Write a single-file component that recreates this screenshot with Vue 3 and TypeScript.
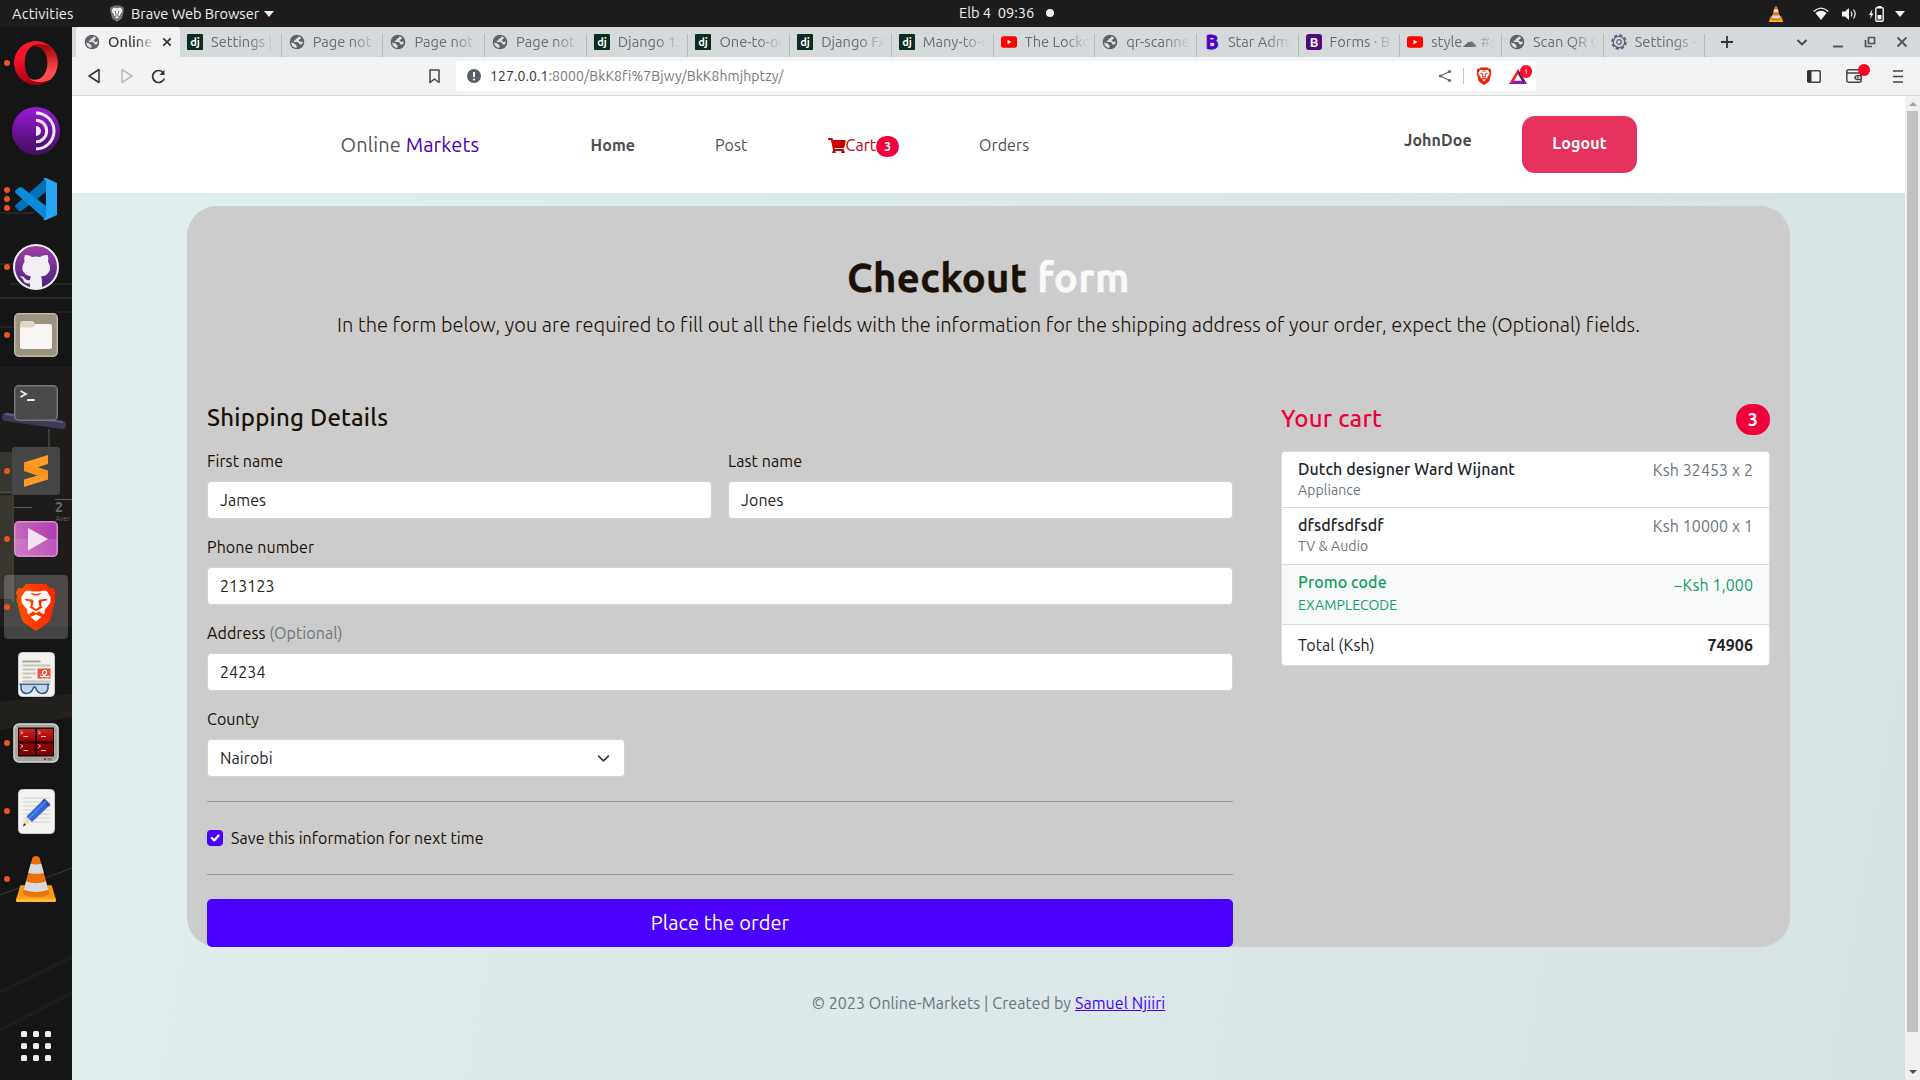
<script setup lang="ts">
interface Tab { icon: 'globe' | 'dj' | 'yt' | 'b' | 'forms' | 'gear'; title: string }
interface DockItem { icon: string; dots: number; active?: boolean }
interface CartItem { name: string; kind: string; price: string }

const tabs: Tab[] = [
  { icon: 'globe', title: 'Online' },
  { icon: 'dj', title: 'Settings |' },
  { icon: 'globe', title: 'Page not f' },
  { icon: 'globe', title: 'Page not f' },
  { icon: 'globe', title: 'Page not f' },
  { icon: 'dj', title: 'Django 1.' },
  { icon: 'dj', title: 'One-to-on' },
  { icon: 'dj', title: 'Django FA' },
  { icon: 'dj', title: 'Many-to-o' },
  { icon: 'yt', title: 'The Lockd' },
  { icon: 'globe', title: 'qr-scanne' },
  { icon: 'b', title: 'Star Admi' },
  { icon: 'forms', title: 'Forms · B' },
  { icon: 'yt', title: 'style☁ #s' },
  { icon: 'globe', title: 'Scan QR C' },
  { icon: 'gear', title: 'Settings -' },
]

const dock: DockItem[] = [
  { icon: 'opera', dots: 1 },
  { icon: 'tor', dots: 0 },
  { icon: 'vscode', dots: 3 },
  { icon: 'github', dots: 1 },
  { icon: 'files', dots: 1 },
  { icon: 'terminal', dots: 0 },
  { icon: 'sublime', dots: 1 },
  { icon: 'media', dots: 1 },
  { icon: 'brave', dots: 1, active: true },
  { icon: 'docs', dots: 0 },
  { icon: 'terminator', dots: 1 },
  { icon: 'notes', dots: 1 },
  { icon: 'vlc', dots: 1 },
]

const cart: CartItem[] = [
  { name: 'Dutch designer Ward Wijnant', kind: 'Appliance', price: 'Ksh 32453 x 2' },
  { name: 'dfsdfsdfsdf', kind: 'TV & Audio', price: 'Ksh 10000 x 1' },
]
</script>

<template>
  <div class="desktop">
    <svg class="defs" width="0" height="0" aria-hidden="true">
      <defs>
        <symbol id="lion" viewBox="0 0 40 48">
          <path d="M10 1 H30 L34 5.500 L37.500 5 L40 9.500 L38.500 13.500 L39.500 16.500 L34.500 36 Q33.500 39 31 40.600 L21.500 47 Q20 48 18.500 47 L9 40.600 Q6.500 39 5.500 36 L.5 16.500 L1.500 13.500 L0 9.500 L2.500 5 L6 5.500 Z" />
          <path fill="#fff" d="M12.500 7.600 L16.500 8.600 H23.500 L27.500 7.600 L31 8.200 L34.700 14.600 L34.200 20 L28.500 27 L29 30 L27 31.200 L23.200 28.200 L20 30 L16.800 28.200 L13 31.200 L11 30 L11.500 27 L5.800 20 L5.300 14.600 L9 8.200 Z" />
          <path d="M8.500 15.800 L16.300 16.400 L17.600 18 L16.500 23.500 L20 26.300 L23.500 23.500 L22.400 18 L23.700 16.400 L31.500 15.800 L30.500 17.400 L25.600 18.600 L25.200 22.600 L26.400 24.500 L20 28.500 L13.600 24.500 L14.800 22.600 L14.400 18.600 L9.500 17.400 Z M14 9.800 L20 11 L26 9.800 L22.500 12.500 H17.500 Z" />
          <path fill="#fff" d="M20 31.500 L25.500 34 L20 38.500 L14.500 34 Z" />
        </symbol>
        <symbol id="cone" viewBox="0 0 42 48">
          <path d="M5 31 H37 L41.500 46 Q41.500 48 40 48 H2 Q.5 48 .5 46 Z" fill="#f99b12" />
          <path d="M1 44.500 H41 L41.500 46.500 Q41 48 40 48 H2 Q.5 48 .5 46.500 Z" fill="#ffb838" />
          <path d="M17.500 2.500 Q21 -.5 24.500 2.500 L34.500 38 Q34 43 21 43 Q8 43 7.500 38 Z" fill="#e8730c" />
          <path d="M15.600 9 Q21 10.500 26.400 9 L29 18 Q21 20.500 13 18 Z M11 27 Q21 30.500 31 27 L33.600 35.500 Q21 40 8.400 35.500 Z" fill="#d5dade" />
        </symbol>
        <linearGradient id="torFill" x1="0" y1="0" x2="0" y2="1"><stop offset="0" stop-color="#991ad6" /><stop offset="1" stop-color="#420c5d" /></linearGradient>
        <linearGradient id="operaOuter" x1="0" y1="0" x2=".3" y2="1"><stop offset="0" stop-color="#ff1b2d" /><stop offset=".4" stop-color="#f51428" /><stop offset="1" stop-color="#a70014" /></linearGradient>
        <linearGradient id="operaInner" x1="0" y1="0" x2="0" y2="1"><stop offset="0" stop-color="#9c0000" /><stop offset=".7" stop-color="#ff4b4b" /></linearGradient>
        <linearGradient id="ghFill" x1="0" y1="0" x2="0" y2="1"><stop offset="0" stop-color="#a040a4" /><stop offset="1" stop-color="#452280" /></linearGradient>
        <linearGradient id="mediaFill" x1="0" y1="0" x2="1" y2="0"><stop offset="0" stop-color="#c569bb" /><stop offset="1" stop-color="#b23bb0" /></linearGradient>
        <linearGradient id="braveFill" x1="0" y1="0" x2="1" y2="0"><stop offset="0" stop-color="#ff5500" /><stop offset="1" stop-color="#ff2000" /></linearGradient>
        <linearGradient id="termRed" x1="0" y1="0" x2="0" y2="1"><stop offset="0" stop-color="#c22" /><stop offset=".5" stop-color="#900" /><stop offset="1" stop-color="#700" /></linearGradient>
      </defs>
    </svg>

    <header class="topbar">
      <span class="activities">Activities</span>
      <svg class="mini-lion" width="14" height="17" viewBox="0 0 40 48"><use href="#lion" fill="#777" /></svg>
      <span class="app-name">Brave Web Browser</span>
      <i class="tri"></i>
      <span class="clock"><span>Elb 4</span><span>09:36</span><i class="notif"></i></span>
      <div class="tray">
        <svg width="14" height="16" viewBox="0 0 42 48"><use href="#cone" /></svg>
        <svg class="wifi" width="16" height="14" viewBox="0 0 16 14"><path d="M.7 4.500 Q8 -2.300 15.300 4.500" fill="none" stroke="#f2f2f2" stroke-width="1.300" /><path d="M2.400 6 Q8 1.600 13.600 6 L8 13 Z" fill="#f2f2f2" /></svg>
        <svg class="vol" width="15" height="14" viewBox="0 0 15 14"><path d="M0 4.500 H3 L7 1 V13 L3 9.500 H0 Z" fill="#f2f2f2" /><path d="M9 4.500 Q10.800 7 9 9.500 M11.500 2.500 Q14.800 7 11.500 11.500" fill="none" stroke="#f2f2f2" stroke-width="1.200" /></svg>
        <svg class="bat" width="15" height="16" viewBox="0 0 15 16"><path d="M3.500 3 L0 9 H2 L1 13 L4.500 7.500 H2.600 Z" fill="#f2f2f2" /><rect x="6.800" y="1.800" width="7.400" height="13.400" rx="1" fill="none" stroke="#f2f2f2" stroke-width="1.400" /><rect x="8.500" y="0" width="4" height="2" fill="#f2f2f2" /><rect x="8.500" y="9" width="4" height="4.500" fill="#f2f2f2" /></svg>
        <i class="tri"></i>
      </div>
    </header>

    <div class="main">
      <aside class="dock">
        <svg class="wallpaper" width="72" height="1053" viewBox="0 0 72 1053">
          <rect width="72" height="1053" fill="#141514" />
          <rect y="340" width="72" height="260" fill="#1d1c1b" />
          <path d="M0 186 H34 M0 237 H40 M10 257 H72 M0 271 H72" stroke="#3e3b31" stroke-width="1.500" opacity=".6" />
          <path d="M0 300 H14 M56 285 H72" stroke="#3a3830" opacity=".7" />
          <path d="M6 390 L62 398" stroke="#3f3a55" stroke-width="8" stroke-linecap="round" />
          <path d="M6 387 L62 395" stroke="#5d5581" stroke-width="2.500" stroke-linecap="round" />
          <path d="M0 425 H12 V467 H0 Z M0 468 H12 V572 H0 Z" fill="#37362f" />
          <path d="M13 465 V575 M49 402 V440 M0 465 H14" stroke="#4a4539" stroke-width="1.500" />
          <path d="M55 472.500 H72 M14 480.500 H32" stroke="#5c5c59" />
          <text x="55" y="485" font-size="14" font-weight="700" fill="#6a6a68">2</text>
          <text x="55.500" y="493.500" font-size="7" fill="#6a6a68">Aver</text>
          <path d="M0 675 L72 667 V690 L0 703 Z" fill="#22211d" />
          <path d="M0 868 L72 841" stroke="#3b3d3b" />
          <path d="M0 965 L72 930 M0 1003 L72 966" stroke="#1c1d1a" stroke-width="4" />
        </svg>
        <div v-for="item in dock" :key="item.icon" class="dock-item" :class="{ active: item.active }">
          <span class="dots"><i v-for="n in item.dots" :key="n"></i></span>
          <svg v-if="item.icon === 'opera'" width="44" height="44" viewBox="0 0 44 44">
            <path fill-rule="evenodd" fill="url(#operaOuter)" d="M22 0 A22 22 0 1 0 22 44 A22 22 0 1 0 22 0 Z M22 4.500 C29 4.500 33.500 12 33.500 22 C33.500 32 29 39.500 22 39.500 C15 39.500 10.800 32 10.800 22 C10.800 12 15 4.500 22 4.500 Z" />
            <path fill="url(#operaInner)" d="M15 6.500 C19 2.500 28 2 36.500 5.500 C46 14 46 30 36.500 38.500 C28 42.500 19 41.500 15 37.500 C24 42 33.500 35 33.500 22 C33.500 9 24 2 15 6.500 Z" />
          </svg>
          <svg v-else-if="item.icon === 'tor'" width="48" height="48" viewBox="0 0 48 48">
            <circle cx="24" cy="24" r="24" fill="url(#torFill)" />
            <path d="M24 13.300 A10.700 10.700 0 0 1 24 34.700 M24 6 A18 18 0 0 1 24 42" fill="none" stroke="#f4e8fc" stroke-width="3" />
            <path d="M24 19 A5 5 0 0 1 24 29 Z" fill="#f4e8fc" />
          </svg>
          <svg v-else-if="item.icon === 'vscode'" width="44" height="44" viewBox="0 0 44 44">
            <path d="M32 1 L1.500 28 Q.5 29.500 1.500 30.500 L5 34 Q6.500 34.500 8 33.500 L32 15 Z" fill="#0071b8" />
            <path d="M32 43 L1.500 16 Q.5 14.500 1.500 13.500 L5 10.500 Q6.500 9.500 8 10.500 L32 29 Z" fill="#0a8ad6" />
            <path d="M32 1 L43 6 V38 L32 43 Q30 43.500 29 42 Q32 42 32 39 V5 Q32 2 29 2 Q30.500 .5 32 1 Z" fill="#27a5f2" />
          </svg>
          <svg v-else-if="item.icon === 'github'" width="46" height="46" viewBox="0 0 46 46">
            <circle cx="23" cy="23" r="22" fill="url(#ghFill)" stroke="#f0edf2" stroke-width="2" />
            <path d="M12 11 Q16 10.500 19 13 Q23 12 27 13 Q30 10.500 34.500 11 Q36 14 35 18 Q38 22 36.500 27 Q34 32 28 32.500 Q29 34 29 36 V44 Q23 46 17 44 V39.500 Q11 40 10 35 L7 32.500 Q10 31.500 12 34.500 Q14 37 17 36 Q17 34 18 32.500 Q11 31 9.500 26 Q9 21 11.500 18 Q10.500 14 12 11 Z" fill="#f1eff3" />
          </svg>
          <svg v-else-if="item.icon === 'files'" width="44" height="44" viewBox="0 0 44 44">
            <rect x=".75" y=".75" width="42.500" height="42.500" rx="4" fill="#9b927f" stroke="#bdb6a5" stroke-width="1.500" />
            <path d="M6 12 Q6 8 9 8 H18 Q20 8 21 10.500 L23 12 H34 V20 H6 Z" fill="#ded8c9" />
            <path d="M6 18 V14.500 H18 Q20 14.500 21 12.500 L22 11 H36 Q38 11 38 13.500 V33.500 Q38 36 35.500 36 H8.500 Q6 36 6 33.500 Z" fill="#f8f7f5" />
          </svg>
          <svg v-else-if="item.icon === 'terminal'" width="44" height="36" viewBox="0 0 44 36">
            <rect x=".75" y=".75" width="42.500" height="34.500" rx="4" fill="#4a4a4a" stroke="#777" stroke-width="1.500" />
            <path d="M6.500 6 L12 9 L6.500 12 M13 15 H20.500" fill="none" stroke="#eee" stroke-width="1.800" />
          </svg>
          <svg v-else-if="item.icon === 'sublime'" width="48" height="48" viewBox="0 0 48 48">
            <rect width="48" height="48" rx="3" fill="#454545" />
            <path d="M12 15.500 L36 8 V17 L12 24.500 Z M12 32.500 L36 25.500 V32.500 L12 40 Z" fill="#ff9b27" />
            <path d="M12 15.500 V24 L36 32.500 V23.500 L22 19 Z" fill="#f7931e" />
          </svg>
          <svg v-else-if="item.icon === 'media'" width="44" height="36" viewBox="0 0 44 36">
            <rect x=".75" y=".75" width="42.500" height="34.500" rx="4" fill="url(#mediaFill)" stroke="#d58fce" stroke-width="1.500" />
            <path d="M1 18 H43 V32 Q43 35 40 35 H4 Q1 35 1 32 Z" fill="#fff" opacity=".13" />
            <path d="M14 7 L34 18 L14 29.500 Z" fill="#f3e3f2" />
          </svg>
          <svg v-else-if="item.icon === 'brave'" width="42" height="48" viewBox="0 0 40 48"><use href="#lion" fill="url(#braveFill)" /></svg>
          <svg v-else-if="item.icon === 'docs'" class="lift" width="37" height="45" viewBox="0 0 37 45">
            <rect x=".5" y=".5" width="36" height="44" rx="4" fill="#f1f1f0" stroke="#ccc" />
            <path d="M4.500 9.500 H22.500" stroke="#a9a08c" stroke-width="2" />
            <path d="M4.500 13.500 H32.500 M4.500 17.500 H17.500 M4.500 21.500 H17.500 M4.500 25.500 H13.500 M4.500 29.500 H32.500" stroke="#c8c3b7" stroke-width="2" />
            <rect x="19.500" y="16.500" width="13" height="10" fill="#f0513f" />
            <path d="M22 24 Q26 26 28.500 21 Q29 18 26 18.500 Q23 20 25.500 23 Q28 26 31.500 24" fill="none" stroke="#fff" stroke-width="1.200" />
            <path d="M1.500 32.300 H31.500" stroke="#1b5eab" stroke-width="1.600" />
            <path d="M3 32.500 V36.500 Q4 41.500 8.500 41.500 Q13.500 41.500 15.500 35.500 Q16.500 34 17.500 35.500 Q19.500 41.500 24.500 41.500 Q29 41.500 30 36.500 V32.500" fill="#a9b6c4" fill-opacity=".5" stroke="#1b5eab" stroke-width="1.500" />
          </svg>
          <svg v-else-if="item.icon === 'terminator'" class="lift" width="46" height="40" viewBox="0 0 46 40">
            <rect x="1" y="1" width="44" height="38" rx="5" fill="#a3a79f" stroke="#d5d8d2" stroke-width="1.500" />
            <rect x="5" y="4.500" width="36" height="29" rx="1" fill="#180505" />
            <path d="M6 6 H22 V18.500 H6 Z M24 6 H40 V18.500 H24 Z M6 20.500 H22 V32 H6 Z M24 20.500 H40 V32 H24 Z" fill="url(#termRed)" />
            <path d="M7.500 8 L10 9.800 L7.500 11 M10.500 13.500 H15 M25 8 L27.500 9.800 L25 11 M28 13.500 H33 M7.500 21.500 L10 23 L7.500 25 M10.500 27.500 H15 M25 21.500 L27.500 23 L25 25 M28 27.500 H33" fill="none" stroke="#fbb" stroke-width="1" />
            <circle cx="32" cy="36.200" r="1.100" fill="#e00" /><rect x="34.500" y="35" width="4" height="2.500" rx="1" fill="#777" />
          </svg>
          <svg v-else-if="item.icon === 'notes'" width="37" height="45" viewBox="0 0 37 45">
            <rect x=".5" y=".5" width="36" height="44" rx="4" fill="#f3f3f2" stroke="#ccc" />
            <path d="M4.500 9 H32.500 M4.500 13 H32.500 M4.500 17 H32.500 M4.500 21 H32.500 M4.500 25 H32.500 M4.500 29 H32.500 M4.500 33 H32.500" stroke="#d2d2d0" />
            <path d="M8.500 28 L13 33 L5 37.500 Z" fill="#f5d9b3" /><path d="M5 37.500 L6 34 L8 36 Z" fill="#333" />
            <path d="M8.500 27.500 L26 10 L32 16 L14 33 Z" fill="#3367d6" /><path d="M24 12 L26.500 9.500 L32.500 15.500 L30 18 Z" fill="#2450ae" /><path d="M11 29 L28 12.500" stroke="#4f83ee" stroke-width="2" />
          </svg>
          <svg v-else class="lift" width="42" height="47" viewBox="0 0 42 48"><use href="#cone" /></svg>
        </div>
        <div class="apps"><i v-for="n in 9" :key="n"></i></div>
      </aside>

      <section class="browser">
        <div class="tabstrip">
          <div v-for="(tab, i) in tabs" :key="i" class="tab" :class="{ current: i === 0 }">
            <svg v-if="tab.icon === 'globe'" class="fav" width="16" height="16" viewBox="0 0 16 16"><circle cx="8" cy="8" r="7.300" fill="#5f6368" /><path d="M9.500 2 Q9.500 4.500 7 4.500 L6.300 6.500 H4.800 L4.800 8 H8.500 Q10.500 8.500 10.500 10.500 H12.500 Q14 9 13.700 7.500 L11.500 8 L9.500 6.500 L11 5 L12.300 4 Z M2 8.500 L5.500 9.500 L7.500 11.500 V14 Q3 13.500 2 8.500 Z" fill="#dfe2e5" /></svg>
            <svg v-else-if="tab.icon === 'dj'" class="fav" width="16" height="16" viewBox="0 0 16 16"><rect width="16" height="16" rx="1" fill="#092e20" /><text x="8" y="11.500" text-anchor="middle" font-size="11" font-weight="700" fill="#fff">dj</text></svg>
            <svg v-else-if="tab.icon === 'yt'" class="fav" width="16" height="16" viewBox="0 0 16 16"><rect y="2.300" width="16" height="11.500" rx="2.500" fill="#f00" /><path d="M6.500 5.800 L10.500 8 L6.500 10.300 Z" fill="#fff" /></svg>
            <svg v-else-if="tab.icon === 'b'" class="fav" width="16" height="16" viewBox="0 0 16 16"><text x="8" y="15" text-anchor="middle" font-size="19.500" font-weight="700" fill="#4b00c8" stroke="#4b00c8" stroke-width=".8">B</text></svg>
            <svg v-else-if="tab.icon === 'forms'" class="fav" width="16" height="16" viewBox="0 0 16 16"><rect width="16" height="16" rx="3" fill="#4e0a77" /><text x="8" y="12.500" text-anchor="middle" font-size="13" font-weight="700" fill="#fff">B</text></svg>
            <svg v-else class="fav" width="16" height="16" viewBox="0 0 16 16"><circle cx="8" cy="8" r="5.700" fill="none" stroke="#606078" stroke-width="1.200" /><circle cx="8" cy="8" r="6.900" fill="none" stroke="#606078" stroke-width="1.700" stroke-dasharray="3.300 2.120" /><circle cx="8" cy="8" r="2.300" fill="none" stroke="#606078" stroke-width="1.200" /></svg>
            <span class="tab-title">{{ tab.title }}</span>
            <svg v-if="i === 0" class="tab-close" width="10" height="10" viewBox="0 0 10 10"><path d="M1.300 1.300 L8.700 8.700 M8.700 1.300 L1.300 8.700" stroke="#333" stroke-width="1.700" /></svg>
          </div>
          <svg class="new-tab" width="12" height="12" viewBox="0 0 12 12"><path d="M6 0 V12 M0 6 H12" stroke="#333" stroke-width="1.800" /></svg>
          <div class="win-btns">
            <svg width="12" height="12" viewBox="0 0 12 12"><path d="M1.500 4 L6 8.500 L10.500 4" fill="none" stroke="#444" stroke-width="1.800" /></svg>
            <svg width="12" height="12" viewBox="0 0 12 12"><path d="M1 10.500 H11" stroke="#555" stroke-width="2" /></svg>
            <svg width="12" height="12" viewBox="0 0 12 12"><path d="M4.500 1.500 H10.500 V7.500 H4.500 Z M1.500 4 V10.500 H8" fill="none" stroke="#555" stroke-width="1.700" /></svg>
            <svg width="12" height="12" viewBox="0 0 12 12"><path d="M1.500 1.500 L10.500 10.500 M10.500 1.500 L1.500 10.500" stroke="#555" stroke-width="1.900" /></svg>
          </div>
        </div>

        <div class="toolbar">
          <svg class="back" width="12" height="16" viewBox="0 0 12 16"><path d="M11 1.500 V14.500 L1 8 Z" fill="none" stroke="#333" stroke-width="1.500" stroke-linejoin="round" /></svg>
          <svg class="fwd" width="12" height="16" viewBox="0 0 12 16"><path d="M1 1.500 V14.500 L11 8 Z" fill="none" stroke="#b9bbbc" stroke-width="1.500" stroke-linejoin="round" /></svg>
          <svg class="reload" width="15" height="15" viewBox="0 0 15 15"><path d="M12.300 3.700 A6 6 0 1 0 13.300 9.500" fill="none" stroke="#333" stroke-width="1.700" /><path d="M13.500 .8 V6 H8.500 Z" fill="#333" /></svg>
          <svg class="bookmark" width="11" height="15" viewBox="0 0 11 15"><path d="M1 1 H10 V13.500 L5.500 10 L1 13.500 Z" fill="none" stroke="#444" stroke-width="1.500" stroke-linejoin="round" /></svg>
          <div class="urlbar">
            <svg width="14" height="14" viewBox="0 0 14 14"><circle cx="7" cy="7" r="7" fill="#5a5e66" /><path d="M7 3 V8" stroke="#fff" stroke-width="2" /><circle cx="7" cy="10.500" r="1.100" fill="#fff" /></svg>
            <span class="url"><b>127.0.0.1</b>:8000/BkK8fi%7Bjwy/BkK8hmjhptzy/</span>
            <svg class="share" width="14" height="14" viewBox="0 0 14 14"><path d="M11.500 2.500 L2.500 7 L11.500 11.500" fill="none" stroke="#666" stroke-width="1.300" /><circle cx="11.500" cy="2.500" r="1.600" fill="#666" /><circle cx="2.500" cy="7" r="1.600" fill="#666" /><circle cx="11.500" cy="11.500" r="1.600" fill="#666" /></svg>
            <i class="sep"></i>
            <svg class="shield" width="16" height="18" viewBox="0 0 40 48"><use href="#lion" fill="#f21d04" /></svg>
            <span class="bat-icon">
              <svg width="18" height="15" viewBox="0 0 18 15"><path d="M9 0 L0 15 L5 12 L9 5 Z" fill="#ff1c1c" /><path d="M0 15 H18 L13 11.800 H5 Z" fill="#8b1fa0" /><path d="M9 0 V5 L13 12 L18 15 Z" fill="#5a1675" /></svg>
              <em>1</em>
            </span>
          </div>
          <div class="tools">
            <svg width="14" height="13" viewBox="0 0 14 13"><rect x=".8" y=".8" width="12.400" height="11.400" rx="1" fill="none" stroke="#444" stroke-width="1.500" /><rect x="0" y="1" width="4.500" height="11" fill="#333" /></svg>
            <span class="wallet">
              <svg width="17" height="14" viewBox="0 0 17 14"><path d="M15 4 V2 Q15 .8 13.500 .8 H2.500 Q.8 .8 .8 2.500 V11.500 Q.8 13.200 2.500 13.200 H13.500 Q15.200 13.200 15.200 11.500 V5 Q15.200 4 14 4 H1 M15.200 6.800 H11 Q9 7 9 8.600 Q9 10.300 11 10.400 H15.200" fill="none" stroke="#444" stroke-width="1.500" /><circle cx="11.800" cy="8.600" r=".9" fill="#444" /></svg>
              <i></i>
            </span>
            <svg width="10" height="13" viewBox="0 0 10 13"><path d="M0 1 H10 M0 6.500 H10 M0 12 H10" stroke="#444" stroke-width="1.700" /></svg>
          </div>
        </div>

        <div class="viewport">
          <div class="page">
            <nav class="nav">
              <div class="brand">Online <span class="markets">Markets</span></div>
              <a class="home">Home</a>
              <a class="post">Post</a>
              <a class="cart-link">
                <svg width="18" height="16" viewBox="0 0 576 512"><path fill="#c70000" d="M528 301 L567 127 Q570 96 544 96 H159 L150 51 Q146 32 126 32 H24 Q0 32 0 56 V72 Q0 96 24 96 H94 L165 441 A56 56 0 1 0 232 448 H442 A56 56 0 1 0 505 438 L508 413 Q513 384 485 384 H218 L212 352 H505 Q524 352 528 301 Z" /></svg><span>Cart</span><em>3</em>
              </a>
              <a class="orders">Orders</a>
              <a class="user">JohnDoe</a>
              <button class="logout">Logout</button>
            </nav>

            <main class="card">
              <div class="intro">
                <h2>Checkout <span class="light">form</span></h2>
                <p>In the form below, you are required to fill out all the fields with the information for the shipping address of your order, expect the (Optional) fields.</p>
              </div>
              <div class="cols">
                <form class="form" @submit.prevent>
                  <h4>Shipping Details</h4>
                  <div class="fields">
                    <div class="field half"><label>First name</label><div class="control">James</div></div>
                    <div class="field half"><label>Last name</label><div class="control">Jones</div></div>
                    <div class="field"><label>Phone number</label><div class="control">213123</div></div>
                    <div class="field"><label>Address <span>(Optional)</span></label><div class="control">24234</div></div>
                    <div class="field county"><label>County</label>
                      <div class="control select">Nairobi<svg width="16" height="16" viewBox="0 0 16 16"><path d="M2 5 L8 11 L14 5" fill="none" stroke="#343a40" stroke-width="2" stroke-linecap="round" stroke-linejoin="round" /></svg></div>
                    </div>
                  </div>
                  <hr>
                  <div class="check">
                    <span class="box"><svg width="16" height="16" viewBox="0 0 20 20"><path d="M6 10 L9 13 L14.500 7" fill="none" stroke="#fff" stroke-width="2.800" stroke-linecap="round" stroke-linejoin="round" /></svg></span>
                    <span>Save this information for next time</span>
                  </div>
                  <hr>
                  <button class="submit">Place the order</button>
                </form>

                <div class="cart">
                  <h4><span>Your cart</span><em>3</em></h4>
                  <ul>
                    <li v-for="item in cart" :key="item.name">
                      <div><h6>{{ item.name }}</h6><small>{{ item.kind }}</small></div>
                      <span class="price">{{ item.price }}</span>
                    </li>
                    <li class="promo">
                      <div><h6>Promo code</h6><small>EXAMPLECODE</small></div>
                      <span class="price">−Ksh 1,000</span>
                    </li>
                    <li class="total"><span>Total (Ksh)</span><strong>74906</strong></li>
                  </ul>
                </div>
              </div>
            </main>

            <footer class="footer">© 2023 Online-Markets | Created by <a>Samuel Njiiri</a></footer>
          </div>
          <div class="scrollbar"><i class="up"></i><div class="thumb"></div><i class="down"></i></div>
        </div>
      </section>
    </div>
  </div>
</template>

<style>
body { margin: 0; overflow: hidden; }
</style>

<style scoped>
* { box-sizing: border-box; }
.desktop { width: 1920px; height: 1080px; display: flex; flex-direction: column; overflow: hidden; font-family: Ubuntu, "Noto Sans", sans-serif; font-size: 16px; line-height: 1.5; }
.defs { position: absolute; }
svg { display: block; flex: none; }
em, i { font-style: normal; }
h2, h4, h6, p, ul { margin: 0; padding: 0; }

.topbar { height: 27px; flex: none; background: #1d1d1d; color: #f0f0f0; display: flex; align-items: center; font-size: 14.670px; line-height: 27px; position: relative; padding: 0 15px 0 12px; }
.activities { width: 98px; letter-spacing: .15px; }
.mini-lion { margin-right: 7px; }
.app-name { width: 133px; white-space: nowrap; letter-spacing: -.05px; }
.tri { width: 0; height: 0; border: 5px solid transparent; border-top: 6px solid #f0f0f0; border-bottom: 0; }
.clock { position: absolute; left: 959px; top: -1px; display: flex; align-items: center; gap: 7px; height: 27px; white-space: nowrap; letter-spacing: -.08px; }
.notif { width: 8px; height: 8px; border-radius: 50%; background: #f0f0f0; margin-left: 5px; }
.tray { margin-left: auto; display: flex; align-items: center; }
.wifi { margin-left: 30px; }
.vol { margin-left: 13px; }
.bat { margin: 0 11px 0 12px; }

.main { flex: 1; display: flex; min-height: 0; }
.dock { width: 72px; flex: none; position: relative; padding-top: 4px; display: flex; flex-direction: column; gap: 4px; overflow: hidden; background: #151515; }
.wallpaper { position: absolute; left: 0; top: 0; }
.dock-item { width: 64px; height: 64px; margin-left: 4px; flex: none; border-radius: 4px; position: relative; display: flex; align-items: center; justify-content: center; }
.dock-item.active { background: rgba(255, 255, 255, .2); }
.lift { margin-bottom: 1px; }
.dots { position: absolute; left: 0; top: 0; height: 64px; display: flex; flex-direction: column; justify-content: center; gap: 3px; }
.dots i { width: 6px; height: 6px; border-radius: 50%; background: #e95420; }
.apps { position: relative; margin: auto 0 19px 21px; width: 30px; display: grid; grid-template-columns: repeat(3, 6px); gap: 6px; }
.apps i { width: 6px; height: 6px; border-radius: 1.500px; background: #eee; }

.browser { flex: 1; min-width: 0; display: flex; flex-direction: column; }
.tabstrip { height: 30px; flex: none; background: #d5d9dc; display: flex; align-items: center; padding-left: 4px; }
.tab { width: 101.700px; height: 30px; flex: none; display: flex; align-items: center; padding-left: 7px; position: relative; color: #696d71; font-size: 14.670px; line-height: 30px; }
.tab::after { content: ""; position: absolute; right: 0; top: 7px; height: 23px; width: 1px; background: #b6babd; }
.tab.current { width: 104px; padding-left: 8px; background: #f3f3f3; border-radius: 4px 4px 0 0; color: #3b3b3b; font-weight: 500; }
.tab.current::after { display: none; }
.fav { margin-right: 8px; }
.tab-title { width: 64px; overflow: hidden; white-space: nowrap; mask-image: linear-gradient(to right, #000 60%, transparent 100%); }
.current .tab-title { width: 46px; }
.tab-close { margin-left: 8px; }
.new-tab { margin-left: 15.500px; }
.win-btns { margin-left: auto; display: flex; gap: 20px; margin-right: 12px; }
.win-btns svg:first-child { margin-right: 4px; }

.toolbar { height: 39px; flex: none; background: #f3f3f3; border-bottom: 1px solid #d6d7d8; display: flex; align-items: center; padding-left: 16px; }
.fwd { margin-left: 20.500px; }
.reload { margin-left: 18.500px; }
.bookmark { margin-left: 263px; }
.urlbar { margin-left: 16px; width: 1080px; height: 30px; border-radius: 4px; background: #fff; display: flex; align-items: center; padding: 0 9px 0 11px; }
.url { margin-left: 9px; color: #74787c; font-size: 14px; letter-spacing: .09px; flex: 1; white-space: nowrap; }
.url b { font-weight: 400; color: #333; }
.sep { width: 1px; height: 16px; background: #c4c6c8; margin: 0 12px 0 11px; }
.bat-icon { position: relative; margin-left: 17px; }
.bat-icon em { position: absolute; left: 11px; top: -4px; width: 12px; height: 13px; border-radius: 6px; background: #fb1029; color: #fff; font-size: 8px; line-height: 13px; text-align: center; }
.tools { margin-left: auto; display: flex; align-items: center; gap: 25px; padding-right: 17px; }
.wallet { position: relative; margin-right: 5px; }
.wallet i { position: absolute; left: 12px; top: -5px; width: 12px; height: 12px; border-radius: 50%; background: #fd0026; }

.viewport { flex: 1; display: flex; min-height: 0; letter-spacing: .085px; }
.page { flex: 1; background: linear-gradient(100deg, #e1efee 0%, #d6e1e3 100%); display: flex; flex-direction: column; }
.nav { height: 97px; flex: none; background: #fff; display: flex; align-items: center; padding-left: 268.500px; color: #505050; white-space: nowrap; }
.brand { width: 250px; font-size: 20px; color: #555; letter-spacing: .15px; }
.markets { color: #4b00b0; }
.home { width: 124.500px; font-weight: 700; }
.post { width: 112.500px; }
.cart-link { display: flex; align-items: center; width: 151.500px; color: #c70000; }
.cart-link em { width: 23px; height: 21px; margin-top: 3px; border-radius: 11px; background: #ef003d; color: #fff; font-weight: 700; font-size: 12px; line-height: 21px; text-align: center; }
.orders { width: 425px; }
.user { width: 118px; font-weight: 700; margin-top: -9px; color: #484848; }
.logout { width: 115px; height: 57px; padding: 0 0 3px; border: 0; border-radius: 13px; background: #e5315d; color: #fff; font: 700 16px/1.500 Ubuntu, "Noto Sans", sans-serif; letter-spacing: .085px; }

.card { width: 1603px; height: 741px; margin: 13px 0 0 115px; border-radius: 30px; background: #ccc; padding: 48px 20px 0; color: #1a1006; flex: none; }
.intro { text-align: center; }
h2 { font-size: 40px; line-height: 48px; font-weight: 700; margin-bottom: 8px; letter-spacing: .35px; -webkit-text-stroke: .4px currentColor; }
.light { color: #f8f9fa; }
.intro p { font-size: 20px; line-height: 30px; font-weight: 300; white-space: nowrap; letter-spacing: .05px; }
.cols { display: flex; gap: 48px; margin-top: 64px; }
.form { width: 1026px; }
.form h4 { font-size: 24px; line-height: 28px; font-weight: 500; margin-bottom: 17px; letter-spacing: .22px; }
.fields { display: flex; flex-wrap: wrap; gap: 16px; }
.field { width: 100%; }
.half { width: 505px; }
.county { width: 418px; }
label { display: block; line-height: 24px; margin-bottom: 8px; }
label span { color: #6c757d; }
.control { height: 38px; padding: 0 12px; background: #fff; border: 1px solid #ced4da; border-radius: 4px; line-height: 36px; color: #212529; }
.select { display: flex; justify-content: space-between; align-items: center; }
.select svg { width: 13px; height: 13px; margin-right: 2px; }
hr { height: 1px; border: 0; margin: 24px 0; background: #999; }
.check { height: 24px; display: flex; gap: 8px; line-height: 24px; }
.box { width: 16px; height: 16px; margin-top: 4px; border-radius: 4px; background: #4a00ff; }
.submit { display: block; width: 100%; height: 48px; border: 0; border-radius: 5px; background: #4a00ff; color: #fff; font: 400 20px/30px Ubuntu, "Noto Sans", sans-serif; letter-spacing: .12px; }

.cart { width: 489px; }
.cart h4 { display: flex; justify-content: space-between; align-items: center; height: 31px; margin-bottom: 16px; color: #ef003d; font-size: 24px; font-weight: 500; letter-spacing: .2px; }
.cart h4 span { margin-top: -2px; }
.cart h4 em { width: 34px; height: 31px; border-radius: 16px; background: #ef003d; color: #fff; font-size: 18px; font-weight: 700; line-height: 31px; text-align: center; }
ul { list-style: none; background: #fff; border: 1px solid #d9dadb; border-radius: 4px; overflow: hidden; color: #212529; }
li { display: flex; justify-content: space-between; padding: 8px 16px; height: 57px; border-bottom: 1px solid #d9dadb; }
li:first-child { height: 56px; }
h6 { font-size: 16px; line-height: 19px; font-weight: 500; }
small { display: block; font-size: 14px; line-height: 23px; color: #6c757d; }
.price { color: #6c757d; line-height: 21px; }
.promo { height: 60px; background: #f8f9fa; }
.promo small { line-height: 26px; }
.promo .price { line-height: 24px; }
.promo h6, .promo small, .promo .price { color: #0f9f5f; }
.total { height: 40px; border: 0; line-height: 24px; }

.footer { margin-top: 44px; text-align: center; color: #6c757d; }
.footer a { color: #4a00ff; text-decoration: underline; }

.scrollbar { width: 15px; flex: none; background: #f1f1f1; display: flex; flex-direction: column; align-items: center; }
.up { width: 0; height: 0; border: 4px solid transparent; border-bottom: 4px solid #a3a3a3; border-top: 0; margin: 6px 0 5px; }
.thumb { width: 11px; height: 921px; background: #c1c1c1; }
.down { width: 0; height: 0; border: 4px solid transparent; border-top: 4px solid #505050; border-bottom: 0; margin-top: auto; margin-bottom: 6px; }
</style>
